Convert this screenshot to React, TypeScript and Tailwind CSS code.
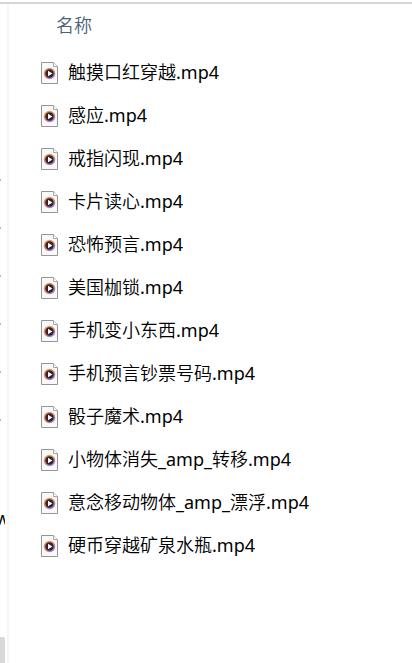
const files = [
    "触摸口红穿越.mp4",
    "感应.mp4",
    "戒指闪现.mp4",
    "卡片读心.mp4",
    "恐怖预言.mp4",
    "美国枷锁.mp4",
    "手机变小东西.mp4",
    "手机预言钞票号码.mp4",
    "骰子魔术.mp4",
    "小物体消失_amp_转移.mp4",
    "意念移动物体_amp_漂浮.mp4",
    "硬币穿越矿泉水瓶.mp4",
];

// what is still visible of the collapsed navigation pane
const navItems = ["pin", "pin", "pin", "pin", "pin", "pin", "", "w"];

function VideoIcon() {
    return (
        <svg width="18" height="22" viewBox="0 0 18 22" className="shrink-0" aria-hidden="true">
            <defs>
                <linearGradient id="disc" x1="0" y1="0" x2="0.6" y2="1">
                    <stop offset="0" stopColor="#ff9a45" />
                    <stop offset="0.5" stopColor="#e58a6a" />
                    <stop offset="1" stopColor="#9a7fd0" />
                </linearGradient>
            </defs>
            <path d="M0.5 0.5H12.5L16.5 4.5V21.5H0.5Z" fill="#f9f9f9" stroke="#959595" />
            <path d="M12.5 0.5V4.5H16.5" fill="#ffffff" stroke="#a6a6a6" />
            <circle cx="8.5" cy="11.5" r="5.8" fill="url(#disc)" />
            <circle cx="8.5" cy="11.5" r="4.2" fill="#2b2530" />
            <path d="M7 8.8V14.2L11.4 11.5Z" fill="#ffffff" />
        </svg>
    );
}

function NavPane() {
    return (
        <aside className="flex w-[9px] shrink-0 flex-col border-r-2 border-[#f5f5f5] pt-[152px]">
            {navItems.map((item, index) => (
                <div key={index} className="flex h-12 w-[5px] items-center overflow-hidden">
                    {item === "pin" && <span className="h-0.5 w-px bg-[#b5b5b5]" />}
                    {item === "w" && <span className="flex w-[5px] justify-center pt-1 font-normal">{item}</span>}
                </div>
            ))}
            <div className="mt-auto h-[26px] w-[5px] rounded-tr-xs bg-[#d9d9d9]" />
        </aside>
    );
}

// Latin parts are set a step heavier so they balance the Chinese strokes
function FileName({ name }: { name: string }) {
    return (
        <span>
            {name.split(/([\w.]+)/).map((part, index) => (
                <span key={index} className={index % 2 ? "font-normal" : undefined}>
                    {part}
                </span>
            ))}
        </span>
    );
}

export default function App() {
    return (
        <div className="flex min-h-screen flex-col bg-white font-['Noto_Sans','Noto_Sans_CJK_SC',sans-serif] text-[18px] font-[350] text-black">
            <div className="mt-0.5 h-0.5 bg-[#d6d6d6]" />
            <div className="flex flex-1">
                <NavPane />
                <main className="min-w-0 flex-1 pl-8">
                    <h1 className="flex h-[47px] items-center pb-1 pl-[15px] text-[#4c607a]">名称</h1>
                    <ul>
                        {files.map((name) => (
                            <li key={name} className="flex h-[43px] items-center gap-[9px] whitespace-nowrap">
                                <VideoIcon />
                                <FileName name={name} />
                            </li>
                        ))}
                    </ul>
                </main>
            </div>
        </div>
    );
}
